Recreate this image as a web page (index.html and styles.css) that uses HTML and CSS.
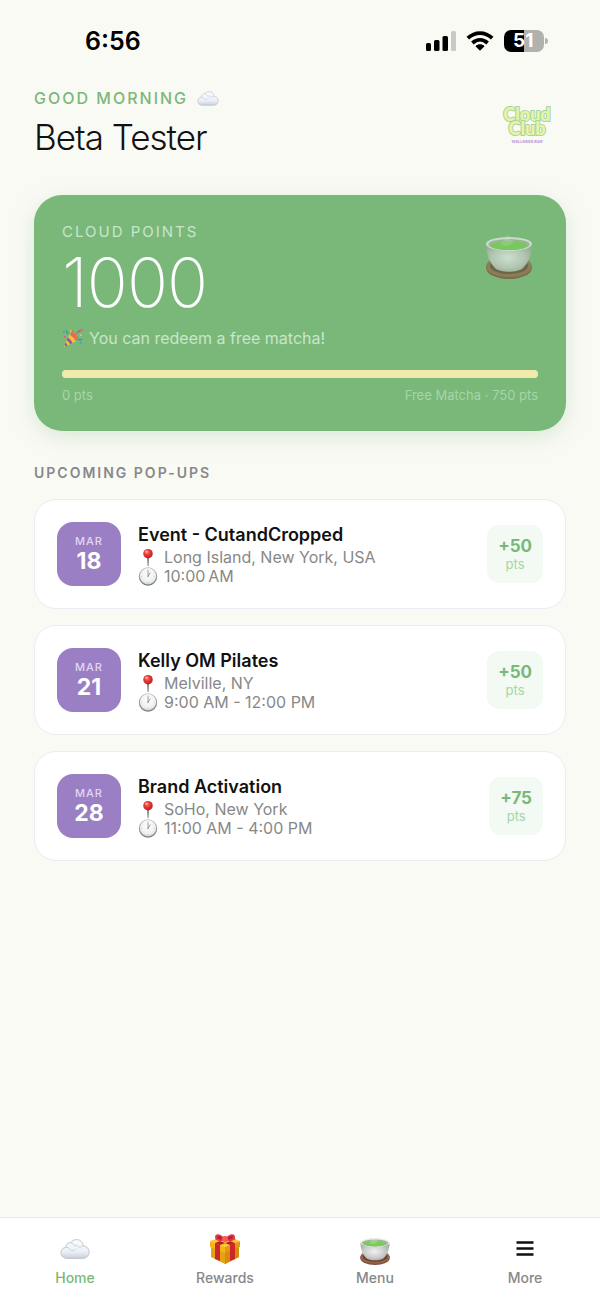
FILE: index.html
```html
<!DOCTYPE html>
<html lang="en">
<head>
<meta charset="UTF-8" />
<meta name="viewport" content="width=device-width, initial-scale=1" />
<title>Cloud Club</title>
<link rel="stylesheet" href="styles.css">
</head>
<body>
  <!-- shared icons -->
  <svg class="sprite" aria-hidden="true">
    <defs>
      <linearGradient id="cloudFill" x1="0" y1="0" x2="0" y2="1">
        <stop offset="0" stop-color="#fafcff"/><stop offset=".65" stop-color="#eceff7"/><stop offset="1" stop-color="#c9ced9"/>
      </linearGradient>
      <radialGradient id="cupFill" cx=".48" cy=".5" r=".6">
        <stop offset="0" stop-color="#f1f1f1"/><stop offset=".6" stop-color="#c9cbc9"/><stop offset="1" stop-color="#a2a5a2"/>
      </radialGradient>
      <radialGradient id="pinFill" cx=".4" cy=".35" r=".7">
        <stop offset="0" stop-color="#ff776b"/><stop offset=".5" stop-color="#e0342f"/><stop offset="1" stop-color="#b91f20"/>
      </radialGradient>
      <linearGradient id="clockRim" x1="0" y1="0" x2="0" y2="1">
        <stop offset="0" stop-color="#b9bcbd"/><stop offset="1" stop-color="#767a7c"/>
      </linearGradient>
      <radialGradient id="clockFace" cx=".5" cy=".35" r=".7">
        <stop offset="0" stop-color="#ffffff"/><stop offset=".7" stop-color="#eeeff0"/><stop offset="1" stop-color="#c8cacc"/>
      </radialGradient>
    </defs>
    <symbol id="cloud" viewBox="0 0 32 22">
      <path d="M8 21C3.700 21 1 18.400 1 15C1 11.700 3.400 9.400 6.400 9.200C6.200 6 8.600 3.800 11.600 4.200C13 1.800 15.300 1 17.700 1C21.600 1 24.600 3.800 24.700 7.600C28.600 7.900 31 10.800 31 14.300C31 18.200 28.200 21 24 21Z" fill="url(#cloudFill)" stroke="#b7bdc9" stroke-width=".9"/>
      <path d="M6.400 9.400C8.200 9 10 9.800 10.800 11.200M11.600 4.400C13.800 4.600 15.300 6 15.600 7.600C18 7 20.400 8 21.400 10C22.200 8.600 23.300 7.900 24.700 7.700M11 11.700C12.600 13 15 13 16.500 11.700" fill="none" stroke="#c5cbd6" stroke-width=".9" stroke-linecap="round"/>
    </symbol>
    <symbol id="tea" viewBox="0 0 48 48">
      <ellipse cx="24" cy="36" rx="23" ry="11" fill="#7d4f38"/>
      <ellipse cx="24" cy="34.500" rx="23" ry="10.500" fill="#93654b"/>
      <ellipse cx="24" cy="34" rx="19" ry="8" fill="#6b4231"/>
      <path d="M1 12C1.500 22 4 30 10 36C15 41 33 41 38 36C44 30 46.500 22 47 12Z" fill="url(#cupFill)"/>
      <ellipse cx="24" cy="12" rx="23" ry="7" fill="#e9ebe9"/>
      <ellipse cx="24" cy="12.500" rx="20.500" ry="5.500" fill="#a5b5a0"/>
      <ellipse cx="24" cy="13.600" rx="18" ry="4.400" fill="#78ce55"/>
      <path d="M16 13C15 9 20 10 20 6C21 4 22 4 23 2C25 5 23 7 27 8C30 10 27 13 22 14Z" fill="#fff" opacity=".2"/>
    </symbol>
    <symbol id="gift" viewBox="0 0 32 32">
      <path d="M2 14L16 19L30 14V24L16 31L2 24Z" fill="#e4a315"/>
      <path d="M16 18V31L30 24V13Z" fill="#d58b0b"/>
      <path d="M1 8L16 3L31 8L16 14Z" fill="#ffc52d"/>
      <path d="M1 8L16 14V20L1 14Z" fill="#f6b31b"/>
      <path d="M31 8L16 14V20L31 14Z" fill="#e29a10"/>
      <path d="M6 10L11 12V28L6 26ZM26 10L21 12V28L26 26Z" fill="#cc2828"/>
      <path d="M6 10L22 4L27 6L11 12ZM26 10L10 4L6 6L21 12Z" fill="#b72025"/>
      <path d="M16 6C12 0 6 0 6 4C6 8 11 9 16 7C21 9 26 8 26 4C26 0 20 0 16 6Z" fill="#e33b45"/>
      <path d="M15 6C12 3 9 2 8 4C8 6 11 7 15 6ZM17 6C20 3 23 2 24 4C24 6 21 7 17 6Z" fill="#b7202e"/>
      <circle cx="16" cy="6" r="3" fill="#f35a60"/>
    </symbol>
    <symbol id="party" viewBox="0 0 22 20">
      <path d="M7.500 6.500C10 7 13.500 11 13.800 13.500L2 19Z" fill="#f5c13b"/>
      <path d="M6 9.500C8 11 9.500 13 10.500 15L8 16.300C7.500 14.500 6.300 13 4.700 12.200ZM3.600 14.800C4.600 15.400 5.300 16.400 5.500 17.500L3.500 18.400L2.800 16.800Z" fill="#8f55a9"/>
      <path d="M8.500 7.500C8.500 5 10 4 11 1.500C11.600 3.600 12 5 11.600 6.500C13 5.500 14 4.500 15.500 4.500C14.500 6.500 14.500 7.500 13.500 8.500C15 8 16 8.500 17 9.500C15 10 14 11.500 13.500 13C12.500 10.500 10.500 8.500 8.500 7.500Z" fill="#ee6a45"/>
      <path d="M6 6C4.500 5 5.500 3.500 4 2.500M15.500 12C17 10.500 18 12.500 20 11.500" fill="none" stroke="#4289c4" stroke-width="1.300"/>
      <path d="M15.500 5C15.500 3 18 4 18.500 2" fill="none" stroke="#b952a0" stroke-width="1.300"/>
      <path d="M1 3H2.600V4.600H1ZM18 14H19.600V15.600H18Z" fill="#3b9cd0"/>
      <path d="M19.500 1H21V2.500H19.500ZM2 8H3.500V9.500H2Z" fill="#e75757"/>
      <path d="M8 2H9.500V3.500H8ZM18 6.500H19.500V8H18Z" fill="#f5cc40"/>
    </symbol>
    <symbol id="pin" viewBox="0 0 20 20">
      <path d="M9 9H11L10.600 19H9.600Z" fill="#777b7e"/>
      <circle cx="10" cy="6" r="5" fill="url(#pinFill)"/>
      <ellipse cx="8.500" cy="4" rx="1.600" ry="1" fill="#fff" opacity=".5"/>
    </symbol>
    <symbol id="clock" viewBox="0 0 20 20">
      <circle cx="10" cy="10" r="9.700" fill="url(#clockRim)"/>
      <circle cx="10" cy="9.700" r="8.600" fill="url(#clockFace)"/>
      <path d="M10 2.500V3.500M10 16V17M2.700 10H3.700M16.300 10H17.300" stroke="#bbb" stroke-width=".7"/>
      <path d="M10 10V4M10 10L12.200 6.200" stroke="#77797b" stroke-width=".8" stroke-linecap="round"/>
    </symbol>
  </svg>

  <div class="status-bar">
    <span class="time">6:56</span>
    <div class="status-icons">
      <svg class="signal" viewBox="0 0 30 20" aria-label="Signal">
        <rect x="0" y="12" width="5" height="8" rx="1.500"/>
        <rect x="8" y="9" width="5.500" height="11" rx="1.500"/>
        <rect x="16.500" y="5" width="5.500" height="15" rx="1.500"/>
        <rect x="25" y="0" width="5" height="20" rx="1.500" fill="#c9cac6"/>
      </svg>
      <svg class="wifi" viewBox="0 0 28 20" aria-label="Wi-Fi">
        <path d="M1.800 7.200C9 .4 19 .4 26.200 7.200M6.400 12C11 7.800 17 7.800 21.600 12" fill="none" stroke="#000" stroke-width="3.800"/>
        <path d="M9.400 15.200C12.200 12.700 15.800 12.700 18.600 15.200L14 19.800Z"/>
      </svg>
      <div class="battery">51</div>
    </div>
  </div>

  <main class="container">
    <header class="header">
      <div>
        <p class="greeting">GOOD MORNING <svg class="greeting-icon"><use href="#cloud"/></svg></p>
        <h1 class="name">Beta Tester</h1>
      </div>
      <svg class="logo" viewBox="0 0 56 50" role="img" aria-label="Cloud Club Wellness Bar">
        <g class="logo-name" text-anchor="middle">
          <text x="28" y="21">Cloud</text>
          <text x="28" y="35">Club</text>
        </g>
        <text class="logo-tag" x="28" y="43" text-anchor="middle">WELLNESS BAR</text>
      </svg>
    </header>

    <section class="points-card">
      <svg class="points-icon"><use href="#tea"/></svg>
      <p class="points-label">CLOUD POINTS</p>
      <p class="points-total">1000</p>
      <p class="points-note"><svg class="note-icon"><use href="#party"/></svg>You can redeem a free matcha!</p>
      <div class="progress"><div class="progress-fill" style="width: 100%"></div></div>
      <div class="progress-labels"><span>0 pts</span><span>Free Matcha · 750 pts</span></div>
    </section>

    <h2 class="section-title">UPCOMING POP-UPS</h2>
    <div class="events">
      <article class="event">
        <div class="date"><span class="month">MAR</span><span class="day">18</span></div>
        <div class="event-info">
          <h3>Event - CutandCropped</h3>
          <p><svg><use href="#pin"/></svg>Long Island, New York, USA</p>
          <p><svg><use href="#clock"/></svg>10:00&#8239;AM</p>
        </div>
        <div class="badge"><strong>+50</strong><span>pts</span></div>
      </article>
      <article class="event">
        <div class="date"><span class="month">MAR</span><span class="day">21</span></div>
        <div class="event-info">
          <h3>Kelly OM Pilates</h3>
          <p><svg><use href="#pin"/></svg>Melville, NY</p>
          <p><svg><use href="#clock"/></svg>9:00 AM - 12:00 PM</p>
        </div>
        <div class="badge"><strong>+50</strong><span>pts</span></div>
      </article>
      <article class="event">
        <div class="date"><span class="month">MAR</span><span class="day">28</span></div>
        <div class="event-info">
          <h3>Brand Activation</h3>
          <p><svg><use href="#pin"/></svg>SoHo, New York</p>
          <p><svg><use href="#clock"/></svg>11:00 AM - 4:00 PM</p>
        </div>
        <div class="badge"><strong>+75</strong><span>pts</span></div>
      </article>
    </div>
  </main>

  <nav class="tab-bar">
    <a class="tab active" href="#home"><svg viewBox="0 -6 32 34"><use href="#cloud" width="32" height="22"/></svg>Home</a>
    <a class="tab" href="#rewards"><svg><use href="#gift"/></svg>Rewards</a>
    <a class="tab" href="#menu"><svg viewBox="-1 -3 50 50"><use href="#tea" width="48" height="48"/></svg>Menu</a>
    <a class="tab" href="#more"><svg viewBox="0 0 32 32"><path d="M7.500 9.500H24.500M7.500 15.500H24.500M7.500 21.500H24.500" stroke="#111" stroke-width="2.400"/></svg>More</a>
  </nav>
</body>
</html>
```

FILE: styles.css
```css
* {
  box-sizing: border-box;
}
body {
  margin: 0;
  min-height: 100vh;
  display: flex;
  flex-direction: column;
  font-family: Inter, 'Liberation Sans', sans-serif;
  color: #111;
  background: #fafaf5;
}
h1, h2, h3, p {
  margin: 0;
}
.sprite {
  position: absolute;
  width: 0;
  height: 0;
}

/* status bar */
.status-bar {
  display: flex;
  justify-content: space-between;
  align-items: center;
  height: 82px;
  padding: 0 56px 0 85px;
}
.time {
  font-size: 25px;
  font-weight: 600;
  color: #000;
}
.status-icons {
  display: flex;
  align-items: center;
  gap: 10px;
}
.signal {
  width: 30px;
  height: 20px;
}
.wifi {
  width: 28px;
  height: 20px;
}
.battery {
  position: relative;
  width: 40px;
  height: 22px;
  padding-left: 9px;
  border-radius: 7px;
  background: linear-gradient(90deg, #000 51%, #b1b2ae 51%);
  color: #fff;
  font-size: 19px;
  font-weight: 700;
  line-height: 22px;
}
.battery::after {
  content: "";
  position: absolute;
  top: 8px;
  right: -4px;
  width: 3px;
  height: 6px;
  border-radius: 0 3px 3px 0;
  background: #b1b2ae;
}

.container {
  flex: 1;
  padding: 0 34px 34px;
}
.header {
  display: flex;
  justify-content: space-between;
  align-items: center;
  padding: 4px 11px 31px 0;
}
.greeting {
  display: flex;
  align-items: center;
  gap: 9px;
  font-size: 16px;
  line-height: 24px;
  font-weight: 500;
  letter-spacing: 2px;
  color: #7ab87a;
}
.greeting-icon {
  width: 22px;
  height: 15px;
}
.name {
  font-size: 35px;
  line-height: 54px;
  font-weight: 300;
  letter-spacing: -1px;
}
.logo {
  width: 56px;
  height: 50px;
}
.logo-name {
  font-family: Lato, sans-serif;
  font-size: 18px;
  font-weight: 900;
  fill: #e9f5a3;
  stroke: #a5d3a4;
  stroke-width: 2px;
  stroke-linejoin: round;
  paint-order: stroke;
}
.logo-tag {
  font-size: 4px;
  font-weight: 700;
  fill: #b49cd8;
}

/* points card */
.points-card {
  position: relative;
  padding: 28px;
  height: 236px;
  border-radius: 28px;
  background: #7ab87a;
  box-shadow: 0 6px 22px rgba(122, 184, 122, 0.25);
}
.points-icon {
  position: absolute;
  top: 37px;
  right: 33px;
  width: 48px;
  height: 48px;
  opacity: 0.7;
}
.points-label {
  font-size: 15px;
  line-height: 18px;
  letter-spacing: 2px;
  color: #c8e6c9;
}
.points-total {
  font-size: 68px;
  line-height: 82px;
  font-weight: 200;
  letter-spacing: -1px;
  color: #fff;
}
.points-note {
  display: flex;
  align-items: center;
  gap: 5px;
  font-size: 16px;
  line-height: 30px;
  color: #c8e6c9;
}
.note-icon {
  width: 22px;
  height: 20px;
}
.progress {
  height: 8px;
  margin-top: 17px;
  border-radius: 4px;
  background: #a5cf9b;
}
.progress-fill {
  height: 100%;
  border-radius: 4px;
  background: #f0ebaa;
}
.progress-labels {
  display: flex;
  justify-content: space-between;
  margin-top: 8px;
  font-size: 13px;
  line-height: 18px;
  color: #a5d6a7;
}

/* events */
.section-title {
  margin: 32px 0 16px;
  font-size: 14px;
  line-height: 20px;
  font-weight: 600;
  letter-spacing: 2px;
  color: #888;
}
.events {
  display: flex;
  flex-direction: column;
  gap: 16px;
}
.event {
  display: flex;
  align-items: center;
  gap: 17px;
  padding: 22px;
  border: 1px solid #ebebf2;
  border-radius: 22px;
  background: #fff;
}
.date {
  display: flex;
  flex-direction: column;
  align-items: center;
  justify-content: center;
  width: 64px;
  height: 64px;
  border-radius: 16px;
  background: #9b7fc4;
}
.month {
  font-size: 11px;
  line-height: 14px;
  font-weight: 500;
  letter-spacing: 1px;
  color: #e2d7f2;
}
.day {
  font-size: 23px;
  line-height: 26px;
  font-weight: 700;
  color: #fff;
}
.event-info {
  flex: 1;
}
.event-info h3 {
  font-size: 18px;
  line-height: 26px;
  font-weight: 600;
}
.event-info p {
  display: flex;
  align-items: center;
  gap: 6px;
  font-size: 16px;
  line-height: 19px;
  color: #888;
}
.event-info svg {
  width: 20px;
  height: 19px;
}
.badge {
  display: flex;
  flex-direction: column;
  align-items: center;
  padding: 11px;
  border-radius: 12px;
  background: #f3faf3;
}
.badge strong {
  font-size: 17px;
  line-height: 20px;
  font-weight: 700;
  color: #7ab87a;
}
.badge span {
  font-size: 13px;
  line-height: 16px;
  color: #a5d6a7;
}

/* bottom tabs */
.tab-bar {
  display: grid;
  grid-template-columns: repeat(4, 1fr);
  height: 84px;
  padding-top: 15px;
  border-top: 1px solid #e9e9ee;
  background: #fff;
}
.tab {
  display: flex;
  flex-direction: column;
  align-items: center;
  gap: 4px;
  font-size: 14px;
  line-height: 18px;
  font-weight: 500;
  color: #888;
  text-decoration: none;
}
.tab svg {
  width: 32px;
  height: 32px;
}
.tab.active {
  color: #7ab87a;
}
```
